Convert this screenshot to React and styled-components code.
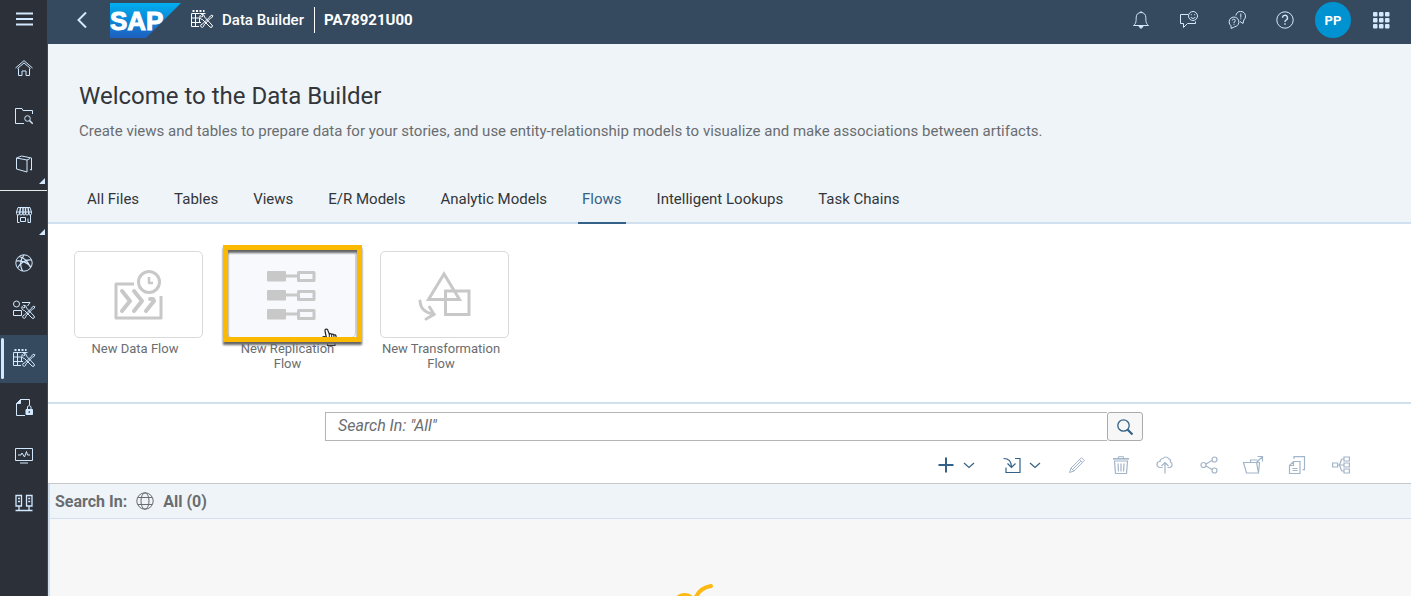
import React from "react";
import styled, { createGlobalStyle } from "styled-components";

const GlobalStyle = createGlobalStyle`
  *, *::before, *::after { box-sizing: border-box; }
  body {
    margin: 0;
    font-family: Roboto, "Liberation Sans", sans-serif;
    font-size: 15px;
    color: #32363a;
    background: #fff;
  }
  button, input { font: inherit; color: inherit; }
  button { border: 0; padding: 0; background: none; cursor: pointer; }
  h1, p, ul { margin: 0; padding: 0; }
`;

const Shell = styled.div`
  display: flex;
  height: 100vh;
  overflow: hidden;
`;

const Sidebar = styled.nav`
  flex: none;
  width: 48px;
  background: #2c3139;
  border-right: 1px solid #354a5f;
  color: #d1e8ff;
`;

const MenuToggle = styled.button`
  display: flex;
  align-items: center;
  justify-content: center;
  width: 100%;
  height: 38px;
  margin-bottom: 6px;
`;

const NavGroup = styled.div`
  padding: ${(p) => (p.$divided ? "0 0 2px" : "0")};
  border-bottom: ${(p) => (p.$divided ? "1px solid #e5e8eb" : "0")};
`;

const NavItem = styled.button`
  position: relative;
  display: flex;
  align-items: center;
  justify-content: center;
  width: 100%;
  height: 48px;
  background: ${(p) => (p.$active ? "#354a5f" : "transparent")};
  &::before {
    content: "";
    position: absolute;
    left: 1px;
    top: 3px;
    bottom: 4px;
    width: 3px;
    border-radius: 2px;
    background: ${(p) => (p.$active ? "#d1e8ff" : "transparent")};
  }
`;

const Corner = styled.span`
  position: absolute;
  right: 2px;
  bottom: 4px;
  border-left: 6px solid transparent;
  border-bottom: 6px solid #d1e8ff;
`;

const Main = styled.div`
  flex: 1;
  min-width: 0;
  display: flex;
  flex-direction: column;
`;

const TopBar = styled.header`
  flex: none;
  display: flex;
  align-items: center;
  height: 44px;
  padding: 0 12px 4px 24px;
  background: #354a5f;
  color: #fff;
`;

const BackButton = styled.button`
  display: flex;
  align-items: center;
  width: 38px;
  height: 36px;
  padding-left: 4px;
  color: #d1e8ff;
`;

const AppName = styled.span`
  display: flex;
  align-items: center;
  gap: 8px;
  height: 26px;
  margin-left: 9px;
  padding-right: 10px;
  border-right: 1px solid #fff;
  font-weight: 500;
`;

const SpaceName = styled.strong`
  padding-left: 9px;
  font-weight: 700;
`;

const TopActions = styled.div`
  display: flex;
  align-items: center;
  gap: 12px;
  margin-left: auto;
`;

const TopButton = styled.button`
  display: flex;
  align-items: center;
  justify-content: center;
  width: 36px;
  height: 36px;
  border-radius: 50%;
  color: ${(p) => (p.$avatar ? "#fff" : "#d1e8ff")};
  background: ${(p) => (p.$avatar ? "#0092d1" : "transparent")};
  font-size: 13px;
  font-weight: 700;
`;

const Hero = styled.section`
  flex: none;
  padding: 36px 31px 0;
  background: #eff4f9;
  border-bottom: 2px solid #d1e0ee;
`;

const Title = styled.h1`
  font-size: 24px;
  line-height: 32px;
  font-weight: 400;
`;

const Intro = styled.p`
  margin-top: 8px;
  line-height: 22px;
  color: #6a6d70;
`;

const Tabs = styled.div`
  display: flex;
  gap: 27px;
  margin: 33px 0 -2px;
  padding-left: 4px;
`;

const Tab = styled.button`
  height: 49px;
  padding: 0 4px;
  border-bottom: 2px solid ${(p) => (p.$active ? "#346187" : "transparent")};
  color: ${(p) => (p.$active ? "#346187" : "#32363a")};
`;

const Tiles = styled.section`
  flex: none;
  display: flex;
  align-items: flex-start;
  gap: 24px;
  min-height: 180px;
  padding: 27px 26px 0;
  border-bottom: 2px solid #d1e0ee;
`;

const Tile = styled.button`
  position: relative;
  width: 129px;
  color: #6a6d70;
  font-size: 13px;
  line-height: 15px;
`;

const TileFace = styled.span`
  display: flex;
  align-items: center;
  justify-content: center;
  height: 87px;
  margin-bottom: 3px;
  border: 1px solid #d9d9d9;
  border-radius: 5px;
  color: #c8c8c8;
  background: ${(p) => (p.$hover ? "#f7f9fc" : "#fff")};
`;

const TileLabel = styled.span`
  display: block;
  padding: ${(p) => (p.$narrow ? "0 12px 0 4px" : "0 7px 0 0")};
`;

const Highlight = styled.span`
  position: absolute;
  left: -4px;
  top: -6px;
  width: 139px;
  height: 97px;
  border: 5px solid #fbb900;
  filter: drop-shadow(0 3px 1px #666);
`;

const HandCursor = styled.svg`
  position: absolute;
  left: 94px;
  top: 76px;
`;

const SearchRow = styled.form`
  flex: none;
  display: grid;
  grid-template-columns: 277fr 818fr 268fr;
  padding-top: 8px;
`;

const SearchBox = styled.div`
  grid-column: 2;
  display: flex;
  height: 29px;
`;

const SearchInput = styled.input`
  flex: 1;
  min-width: 0;
  padding: 0 12px 2px;
  border: 1px solid #b5b5b5;
  border-right: 0;
  background: #fff;
  font-size: 16px;
  outline: 0;
  &::placeholder {
    color: #6a6d70;
    font-style: italic;
    opacity: 1;
  }
`;

const SearchButton = styled.button`
  display: flex;
  align-items: center;
  justify-content: center;
  width: 36px;
  border: 1px solid #ababab;
  border-radius: 3px;
  background: #f7f7f7;
  color: #346187;
`;

const Toolbar = styled.div`
  flex: none;
  display: flex;
  justify-content: flex-end;
  padding: 6px 48px 0 0;
  border-bottom: 1px solid #c5c9ce;
`;

const ToolButton = styled.button`
  display: flex;
  align-items: center;
  justify-content: center;
  gap: 8px;
  width: ${(p) => (p.$menu ? "66px" : "44px")};
  height: 36px;
  color: ${(p) => (p.disabled ? "#a3b5c9" : "#346187")};
`;

const Results = styled.section`
  flex: 1;
  min-height: 0;
  display: flex;
  flex-direction: column;
  border-left: 2px solid #d1e0ee;
  background: #f7f7f7;
`;

const Scope = styled.div`
  flex: none;
  display: flex;
  align-items: center;
  gap: 9px;
  height: 35px;
  padding-left: 5px;
  border-bottom: 1px solid #d1e0ee;
  background: #eff4f9;
  color: #6a6d70;
  font-size: 16px;
  font-weight: 700;
`;

const EmptyState = styled.div`
  display: flex;
  justify-content: center;
  padding-top: 64px;
`;

function Icon({ size = 18, width = 1, children, ...rest }) {
  return (
    <svg
      width={size}
      height={size}
      viewBox={`0 0 ${size} ${size}`}
      fill="none"
      stroke="currentColor"
      strokeWidth={width}
      aria-hidden="true"
      {...rest}
    >
      {children}
    </svg>
  );
}

const Tools = () => (
  <>
    <path d="M14.500 9 22 17a1.400 1.400 0 0 1-2 2l-7.500-7.500A2.800 2.800 0 0 1 10 7.500l1.800 1.600L13 7.900l-1.500-1.700A2.800 2.800 0 0 1 14.500 9Z" />
    <path d="m20.300 8 1.800-1 .8.800-1 1.800-1.200.3-6.600 7-.7 1.800a1.500 1.500 0 0 1-2.400-2l1.800-1 6.900-6.600Z" />
  </>
);

const Mesh = (props) => (
  <Icon size={24} {...props}>
    <path d="M2.500 3h2M6 3h2M9.500 3h2M13 3h1.500" strokeWidth="2" />
    <path d="M9.500 5.500h-8v13h7.500M1.500 10h8M1.500 14.500h9.500M5.500 5.500v13M9.500 10v5M9.500 5.500h6" />
    <Tools />
  </Icon>
);

const icons = {
  menu: <Icon width={2}><path d="M1 3.500h17M1 9h17M1 14.500h17" /></Icon>,
  home: <Icon><path d="m.5 9 8.500-7.300L17.500 9M3.500 9.500v7h3.500v-4.500h4v4.500h3.500v-7" /><path d="M2.500 9.500 9 4l6.500 5.500" /></Icon>,
  folder: <Icon><path d="M17.500 7V3.500H8L7 1.500H.5v15H9" /><circle cx="12.500" cy="11.500" r="2.800" /><path d="m14.500 13.500 3.200 3.200" strokeWidth="1.500" /></Icon>,
  book: <Icon><path d="M1.500 3 12 5v12L1.500 14Z" /><path d="M1.500 3 6.500 1l10 2v12l-1.500-.5" /><path d="M12 5l3-1.500" /></Icon>,
  shop: (
    <Icon>
      <path d="M3 1.500h12l1.500 4.500H1.500Z" />
      <path d="M5.500 1.500 4.500 8M8 1.500V8M10.500 1.500V8M13 1.500l1 6.500" strokeWidth="1.500" />
      <path d="M1.500 6v1.500a1.400 1.400 0 0 0 3 0 1.500 1.500 0 0 0 3 0 1.500 1.500 0 0 0 3 0 1.500 1.500 0 0 0 3 0 1.400 1.400 0 0 0 3 0V6M2.500 9v7.500h2M15.500 9v7.500h-2.500v-4M5.500 11.500h5v4h-5Z" />
    </Icon>
  ),
  globe: <Icon size={20}><circle cx="10" cy="10" r="8.200" /><path d="M2 8c6-1 12 2 15 6M5 3.500c5 1 9 5 11.500 11M10 2C6 7 6 13 8.500 18M17.500 7C12 6 6 10 3.500 15" strokeWidth="1.200" /></Icon>,
  model: <Icon size={24}><circle cx="4.500" cy="5" r="3" /><path d="M1.500 11.500h8v5h-8ZM10 3.500h8l-2.500 3.500" /><Tools /></Icon>,
  mesh: <Mesh />,
  docLock: <Icon><path d="M14.500 7V1.500H5.500L1.500 5.500v12H10" /><path d="M5.500 1.500v4h-4Z" fill="currentColor" /><path d="M11 11.500h6.500v5H11Z" fill="currentColor" /><path d="M12.500 11V9a1.800 1.800 0 0 1 3.500 0v2" /><path d="M14.200 13v2" stroke="#2c3139" /></Icon>,
  monitor: <Icon><path d="M.5 2.500h17v12H.5ZM5 17h8" /><path d="M3 9h3l1-2 2.500 4 2-5.500 1 3.500H15" /></Icon>,
  servers: <Icon><path d="M1 1.500h5.500v10.500H1ZM11.500 1.500H17v10.500h-5.500ZM4 12v4.500M14 12v4.500M.5 16.500h17" strokeWidth="1.300" /><path d="M3 4.500h2M3 7.500h2M13.200 4.500h2M13.200 7.500h2" strokeWidth="1.500" /></Icon>,
  bell: <Icon><path d="M9 1.500c3 0 4.800 2 4.800 5 0 5 .7 6.500 2.700 8h-15c2-1.500 2.700-3 2.700-8 0-3 1.800-5 4.800-5Z" /><path d="M7 15.500h4L9 17.500Z" fill="currentColor" /><path d="M9 0v1.500" /></Icon>,
  feedback: <Icon><path d="M8 3.500H.500v9h3v4l4-4h8v-2" /><circle cx="13" cy="5" r="4.500" /><path d="M10.800 6a2.400 2.400 0 0 0 4.400 0M11.300 3.200v1M14.700 3.200v1" /></Icon>,
  chat: (
    <Icon>
      <path d="M3 14.800A4.900 4.900 0 1 1 6.500 15.800L3.200 17.500Z" />
      <path d="M7.800 4.500a4.900 4.900 0 1 1 8 4.500l-.8 3.500-3-2" />
      <path d="M4.300 9.500a1.500 1.500 0 1 1 1.700 1.600v1M6 12.800v1M12.800 2.500v4M12.800 7.300v1" />
    </Icon>
  ),
  help: <Icon><circle cx="9" cy="9" r="8.200" /><path d="M6.500 6.800a2.500 2.500 0 1 1 3.700 2.200q-1.200.7-1.200 2M9 12.200v1.600" strokeWidth="1.400" /></Icon>,
  grid: (
    <Icon fill="currentColor" stroke="none">
      {[1, 7, 13].map((y) => [1, 7, 13].map((x) => <rect key={`${x}-${y}`} x={x} y={y} width="4.500" height="4.500" rx="1" />))}
    </Icon>
  ),
  search: <Icon width={1.300}><circle cx="7.500" cy="7.500" r="5.700" /><path d="m11.500 11.500 5 5" strokeWidth="2.200" /></Icon>,
  plus: <Icon width={2}><path d="M9 1.500v15M1.500 9h15" /></Icon>,
  chevron: <Icon size={12} width={1.200}><path d="m1 4 5 4.500L11 4" /></Icon>,
  importIn: <Icon width={1.200}><path d="M.500 2.500c6 0 8 3 8 8.500M4.500 7.500l4 4 4-4" /><path d="M12 2.500h5v14H3v-5" /></Icon>,
  pencil: <Icon><path d="M1.500 16.500 3 12 13.500 1.700l2.800 2.800L6 15Z" /><path d="M3 12l3 3M11.500 3.700l2.800 2.800M4.700 13.300l8-8" /></Icon>,
  trash: <Icon><path d="M6.500 2V.7h5V2" /><path d="M1 2.800h16" strokeWidth="1.600" /><path d="m2.500 5 1 12.500h11l1-12.500ZM6 7.500l.5 8M9 7.500v8M12 7.500l-.5 8" strokeWidth="1.200" /></Icon>,
  cloud: <Icon width={1.200}><path d="M6.500 11.500H4a3 3 0 1 1 0-6A3 3 0 0 1 7 2.500a3.300 3.300 0 0 1 5.500 0 3.200 3.200 0 0 1 2 3.500 3 3 0 0 1-.5 5.500h-2.500" /><path d="M9 17.500V7M5.500 10 9 6.500l3.500 3.500" /></Icon>,
  share: <Icon width={1.200}><circle cx="3.500" cy="9" r="2.500" /><circle cx="14.500" cy="3.500" r="2.500" /><circle cx="14.500" cy="14.500" r="2.500" /><path d="m6 8 6-3.500M6 10l6 3.500" /></Icon>,
  moveTo: <Icon size={22} width={1.200}><path d="M1.500 8.500h13l2 10.500h-12ZM14.500 8.500h3l-1 10.500M8.500 8V6h7M14 9l6.500-6.500M15.500 2.500h5v5" /></Icon>,
  copy: <Icon width={1.200}><path d="M5.500 5.500h6.500v12H1.500V9.500ZM5.500 5.500v4h-4" /><path d="M6 3V.700h10.500v13H14.500M4.500 12.500h5M4.500 14.500h5" /></Icon>,
  tree: <Icon width={1.200}><path d="M.600 7h5v4h-5ZM12 1h5.400v4H12ZM12 7h5.400v4H12ZM12 13h5.400v4H12ZM5.500 9H12M7.500 9l2-5.500q.5-.5 1-.5H12M7.500 9l2 5.500q.5.5 1 .5H12" /></Icon>,
  world: <Icon><circle cx="9" cy="9" r="8.200" /><ellipse cx="9" cy="9" rx="4" ry="8.200" /><path d="M2 5.500h14M2 12.500h14" /></Icon>,
};

const tileArt = {
  data: (
    <Icon size={54} width={4} strokeLinecap="round" strokeLinejoin="round">
      <path d="M22 16H4v34h45V28" strokeLinecap="butt" strokeWidth="3" />
      <circle cx="37" cy="14" r="10.500" strokeWidth="3" />
      <path d="M37 9v6h4" strokeWidth="2.500" strokeLinecap="butt" />
      <path d="m10 23 8 10-8 10M22 23l8 10-8 10M34 43l8-10-1-2h-3" />
    </Icon>
  ),
  replication: (
    <Icon size={54} width={3} strokeLinejoin="round">
      {[8, 27, 46].map((y) => (
        <g key={y}>
          <rect x="2" y={y - 5} width="19" height="10.500" rx="1" fill="currentColor" stroke="none" />
          <path d={`M20 ${y}h13`} />
          <rect x="33.500" y={y - 3.500} width="15.500" height="8" />
        </g>
      ))}
    </Icon>
  ),
  transformation: (
    <Icon size={54} width={3}>
      <path d="M26 6 10.500 31.500h31ZM27.500 23H51v23.500H27.500Z" />
      <path d="M2 33c.5 8 5 12 14 13M11.500 39l4.500 7.500L8 51" strokeLinecap="round" />
    </Icon>
  ),
};

const SapLogo = () => (
  <svg width="71" height="35" viewBox="0 0 71 35" role="img" aria-label="SAP">
    <defs>
      <linearGradient id="sapBlue" x1="0" y1="0" x2="0" y2="1">
        <stop offset="0" stopColor="#00aeef" />
        <stop offset="1" stopColor="#1d5fbf" />
      </linearGradient>
    </defs>
    <path d="M0 0h71L36 35H0Z" fill="url(#sapBlue)" />
    <text x="0" y="27" fill="#fff" stroke="#fff" fontFamily="Liberation Sans, sans-serif" fontWeight="700" fontSize="26">SAP</text>
  </svg>
);

const tabs = ["All Files", "Tables", "Views", "E/R Models", "Analytic Models", "Flows", "Intelligent Lookups", "Task Chains"];

const navTop = [["Home", "home"], ["Repository Explorer", "folder"], ["Catalog", "book", true]];
const navBottom = [
  ["Data Marketplace", "shop", true],
  ["Semantic Onboarding", "globe"],
  ["Business Builder", "model"],
  ["Data Builder", "mesh"],
  ["Data Access Controls", "docLock"],
  ["Monitoring", "monitor"],
  ["Connections", "servers"],
];

const topActions = [["Notifications", "bell"], ["Feedback", "feedback"], ["Support", "chat"], ["Help", "help"]];
const disabledTools = [["Edit", "pencil"], ["Delete", "trash"], ["Deploy", "cloud"], ["Share", "share"], ["Move", "moveTo"], ["Copy", "copy"], ["Lineage", "tree"]];

const renderNav = ([label, icon, more]) => (
  <NavItem key={label} type="button" aria-label={label} $active={icon === "mesh"}>
    {icons[icon]}
    {more && <Corner />}
  </NavItem>
);

export default function App() {
  return (
    <>
      <GlobalStyle />
      <Shell>
        <Sidebar aria-label="Main">
          <MenuToggle type="button" aria-label="Menu">{icons.menu}</MenuToggle>
          <NavGroup $divided>{navTop.map(renderNav)}</NavGroup>
          <NavGroup>{navBottom.map(renderNav)}</NavGroup>
        </Sidebar>
        <Main>
          <TopBar>
            <BackButton type="button" aria-label="Back">
              <Icon width={2}><path d="M10 1.500 2.500 9l7.500 7.500" /></Icon>
            </BackButton>
            <SapLogo />
            <AppName><Mesh />Data Builder</AppName>
            <SpaceName>PA78921U00</SpaceName>
            <TopActions>
              {topActions.map(([label, icon]) => (
                <TopButton key={label} type="button" aria-label={label}>{icons[icon]}</TopButton>
              ))}
              <TopButton type="button" $avatar>PP</TopButton>
              <TopButton type="button" aria-label="Product switch">{icons.grid}</TopButton>
            </TopActions>
          </TopBar>

          <Hero>
            <Title>Welcome to the Data Builder</Title>
            <Intro>
              Create views and tables to prepare data for your stories, and use entity-relationship models to visualize and make associations between artifacts.
            </Intro>
            <Tabs role="tablist">
              {tabs.map((t) => (
                <Tab key={t} type="button" role="tab" aria-selected={t === "Flows"} $active={t === "Flows"}>{t}</Tab>
              ))}
            </Tabs>
          </Hero>

          <Tiles>
            <Tile type="button">
              <TileFace>{tileArt.data}</TileFace>
              <TileLabel>New Data Flow</TileLabel>
            </Tile>
            <Tile type="button">
              <TileFace $hover>{tileArt.replication}</TileFace>
              <TileLabel $narrow>New Replication Flow</TileLabel>
              <HandCursor width="18" height="20" viewBox="0 0 18 20" aria-hidden="true">
                <path d="M5.500 11 4 4a1.400 1.400 0 0 1 2.800-.8L8.300 7q1.300-1 2.300.3 1.300-.8 2.200.6 1.700-.6 2.200 1.100l.5 4-1.500 3v2.500H6.500V16L1.500 11.500q-.3-2 2-1.800Z" fill="#fff" stroke="#222" strokeWidth="1.200" />
                <path d="M8.300 7v4M10.700 7.500V11M12.900 8v3" stroke="#222" />
              </HandCursor>
              <Highlight />
            </Tile>
            <Tile type="button">
              <TileFace>{tileArt.transformation}</TileFace>
              <TileLabel>New Transformation Flow</TileLabel>
            </Tile>
          </Tiles>

          <SearchRow role="search" onSubmit={(e) => e.preventDefault()}>
            <SearchBox>
              <SearchInput type="text" aria-label="Search" placeholder={'Search In: "All"'} />
              <SearchButton type="submit" aria-label="Start search">{icons.search}</SearchButton>
            </SearchBox>
          </SearchRow>

          <Toolbar role="toolbar">
            <ToolButton type="button" $menu aria-label="Create">{icons.plus}{icons.chevron}</ToolButton>
            <ToolButton type="button" $menu aria-label="Import">{icons.importIn}{icons.chevron}</ToolButton>
            {disabledTools.map(([label, icon]) => (
              <ToolButton key={label} type="button" disabled aria-label={label}>{icons[icon]}</ToolButton>
            ))}
          </Toolbar>

          <Results>
            <Scope>
              <span>Search In:</span>
              {icons.world}
              <span>All (0)</span>
            </Scope>
            <EmptyState>
              <svg width="120" height="40" viewBox="0 0 120 40" fill="none" stroke="#fdb913" strokeWidth="4" strokeLinecap="round" aria-hidden="true">
                <path d="M24 16q4-11 16-13" />
                <path d="M1 21q3-11 13-11 8 0 12 9l-2 9H1Z" fill="#fdb913" stroke="none" />
              </svg>
            </EmptyState>
          </Results>
        </Main>
      </Shell>
    </>
  );
}
